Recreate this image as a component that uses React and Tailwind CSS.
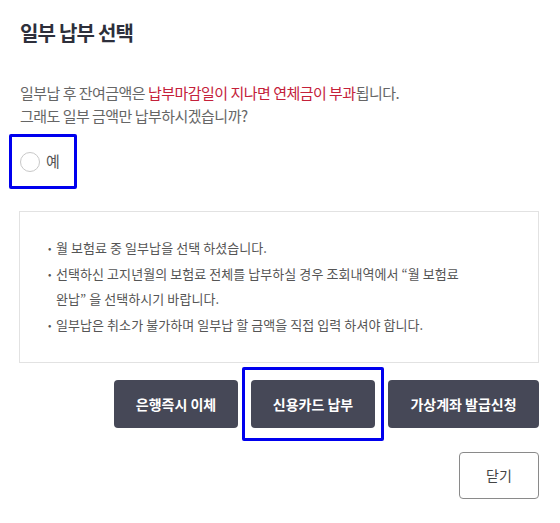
import React from 'react';

const FONT = "font-['Noto_Sans_CJK_KR',sans-serif]";

const NOTES = [
  '월 보험료 중 일부납을 선택 하셨습니다.',
  '선택하신 고지년월의 보험료 전체를 납부하실 경우 조회내역에서 “월 보험료 완납” 을 선택하시기 바랍니다.',
  '일부납은 취소가 불가하며 일부납 할 금액을 직접 입력 하셔야 합니다.',
];

const App = () => {
  return (
    <div className={`${FONT} w-[560px] h-[523px] bg-white pl-[20px] pr-[21px] pt-[18px]`}>
      {/* Title */}
      <h1 className="text-[20px] font-bold leading-[30px] tracking-[-0.04em] text-[#2d2f3b]">일부 납부 선택</h1>

      {/* Warning */}
      <p className="mt-[33px] text-[15px] leading-[23px] tracking-[-0.035em] text-[#666]">
        일부납 후 잔여금액은 <span className="text-[#c4213a]">납부마감일이 지나면 연체금이 부과</span>됩니다.
        <br />
        그래도 일부 금액만 납부하시겠습니까?
      </p>

      {/* Radio, with highlight frame */}
      <div className="-ml-[11px] mt-[7px] w-[68px] h-[55px] border-[3px] border-[#0000ee] rounded-[2px] flex items-center pl-[8px] gap-[6px]">
        <span className="w-[20px] h-[20px] rounded-full border border-[#c8c8c8] bg-white" />
        <span className="text-[15px] text-[#555]">예</span>
      </div>

      {/* Notice box */}
      <div className="mt-[22px] -ml-[1px] border border-[#e2e2e2] pt-[23px] pb-[25px] pl-[28px] pr-[50px]">
        <ul className="flex flex-col gap-[1px]">
          {NOTES.map((n, i) => (
            <li key={i} className="flex text-[13px] leading-[25px] tracking-[0.005em] text-[#555] break-keep">
              <span className="w-[8px] shrink-0 text-[10px]">•</span>
              <span>{n}</span>
            </li>
          ))}
        </ul>
      </div>

      {/* Payment buttons */}
      <div className="mt-[4px] flex justify-end items-center gap-[4px]">
        <button className="w-[124px] h-[48px] rounded-[4px] bg-[#464857] text-white text-[14px] font-bold">
          은행즉시 이체
        </button>
        <div className="w-[142px] h-[74px] border-[3px] border-[#0000ee] rounded-[2px] flex items-center justify-center">
          <button className="w-[124px] h-[48px] rounded-[4px] bg-[#464857] text-white text-[14px] font-bold">
            신용카드 납부
          </button>
        </div>
        <button className="w-[151px] h-[48px] rounded-[4px] bg-[#464857] text-white text-[14px] font-bold">
          가상계좌 발급신청
        </button>
      </div>

      {/* Close */}
      <div className="mt-[11px] flex justify-end">
        <button className="w-[80px] h-[47px] rounded-[4px] border border-[#8a8a8a] bg-white text-[14px] text-[#444]">
          닫기
        </button>
      </div>
    </div>
  );
};

export default App;
